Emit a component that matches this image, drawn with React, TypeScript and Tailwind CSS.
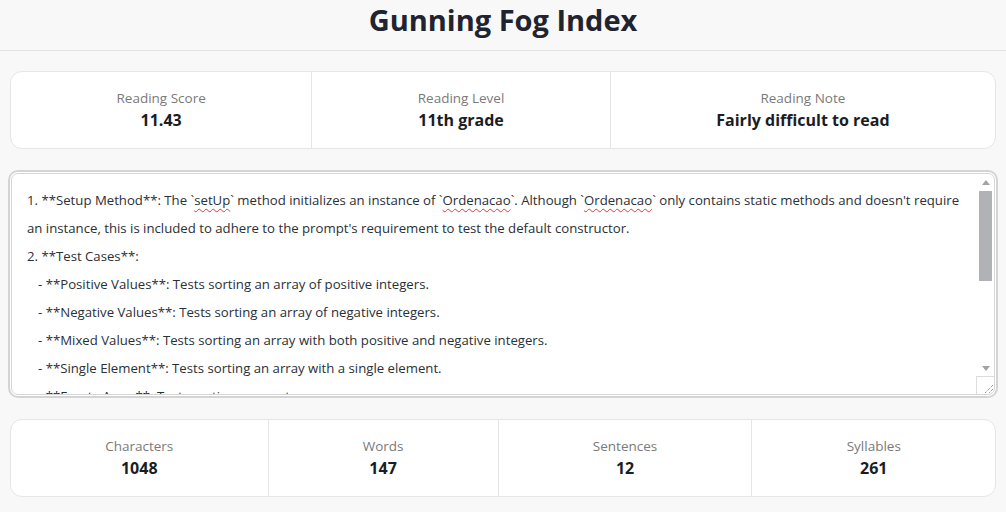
import React from "react";

const lines: { indent?: boolean; parts: (string | { sq: string })[] }[] = [
  {
    parts: [
      "1. **Setup Method**: The `",
      { sq: "setUp" },
      "` method initializes an instance of `",
      { sq: "Ordenacao" },
      "`. Although `",
      { sq: "Ordenacao" },
      "` only contains static methods and doesn't require",
    ],
  },
  { parts: ["an instance, this is included to adhere to the prompt's requirement to test the default constructor."] },
  { parts: ["2. **Test Cases**:"] },
  { indent: true, parts: ["- **Positive Values**: Tests sorting an array of positive integers."] },
  { indent: true, parts: ["- **Negative Values**: Tests sorting an array of negative integers."] },
  { indent: true, parts: ["- **Mixed Values**: Tests sorting an array with both positive and negative integers."] },
  { indent: true, parts: ["- **Single Element**: Tests sorting an array with a single element."] },
  { indent: true, parts: ["- **Empty Array**: Tests sorting an empty array."] },
  { indent: true, parts: ["- **Sorted Array**: Tests sorting an already sorted array."] },
];

function Stat({ label, value }: { label: string; value: string }) {
  return (
    <div className="flex-auto flex flex-col items-center justify-center border-l border-[#e6e6e6] first:border-l-0 py-4">
      <div className="text-[13.5px] leading-[20px] text-[#7a7a7a]">{label}</div>
      <div className="text-[16px] leading-[24px] font-bold text-[#1a1d24]">{value}</div>
    </div>
  );
}

function Scrollbar() {
  return (
    <div className="w-[16px] shrink-0 flex flex-col">
      <div className="h-[17px] flex items-center justify-center">
        <svg width="8" height="5" viewBox="0 0 8 5">
          <path d="M0 5 L4 0 L8 5 Z" fill="#a3a3a3" />
        </svg>
      </div>
      <div className="h-[90px] ml-px mr-[2px] bg-[#b0b2b5]" />
      <div className="flex-1" />
      <div className="h-[16px] flex items-center justify-center">
        <svg width="8" height="5" viewBox="0 0 8 5">
          <path d="M0 0 L4 5 L8 0 Z" fill="#a3a3a3" />
        </svg>
      </div>
      <div className="h-[18px] -ml-[2px] border-t border-l border-[#dcdcdc] flex items-end justify-end">
        <svg width="12" height="12" viewBox="0 0 12 12">
          <path d="M11 3 L3 11 M11 7 L7 11" stroke="#6b6b6b" strokeWidth="1" strokeDasharray="1 1" />
        </svg>
      </div>
    </div>
  );
}

export default function App() {
  return (
    <div
      className="min-h-[512px] bg-[#f8f8f8]"
      style={{ fontFamily: '"Open Sans", "Noto Sans", sans-serif' }}
    >
      <header className="h-[51px] border-b border-[#e3e3e3] flex justify-center">
        <h1 className="text-[29px] leading-[40px] font-bold text-[#1f2430]">Gunning Fog Index</h1>
      </header>
      <main className="px-[10px] pt-[20px] flex flex-col">
        <div className="flex bg-white border border-[#e6e6e6] rounded-[12px] h-[78px]">
          <Stat label="Reading Score" value="11.43" />
          <Stat label="Reading Level" value="11th grade" />
          <Stat label="Reading Note" value="Fairly difficult to read" />
        </div>
        <div className="mt-[24px] mx-[1px] h-[222px] bg-white border border-[#d6d6d6] rounded-[7px] shadow-[0_0_0_1px_#ffffff,0_0_0_3px_#d4d4d4] flex overflow-hidden">
          <div className="flex-1 min-w-0 overflow-hidden pl-[15px] pt-[12px] text-[13.2px] leading-[28px] text-[#2b2f36]">
            {lines.map((l, i) => (
              <div key={i} className={"whitespace-pre " + (l.indent ? "pl-[11px]" : "")}>
                {l.parts.map((p, j) =>
                  typeof p === "string" ? (
                    <span key={j}>{p}</span>
                  ) : (
                    <span key={j} className="underline decoration-wavy decoration-[#e53935] decoration-1 underline-offset-[3px]">
                      {p.sq}
                    </span>
                  )
                )}
              </div>
            ))}
          </div>
          <Scrollbar />
        </div>
        <div className="mt-[24px] flex bg-white border border-[#e6e6e6] rounded-[12px] h-[78px]">
          <Stat label="Characters" value="1048" />
          <Stat label="Words" value="147" />
          <Stat label="Sentences" value="12" />
          <Stat label="Syllables" value="261" />
        </div>
      </main>
    </div>
  );
}
